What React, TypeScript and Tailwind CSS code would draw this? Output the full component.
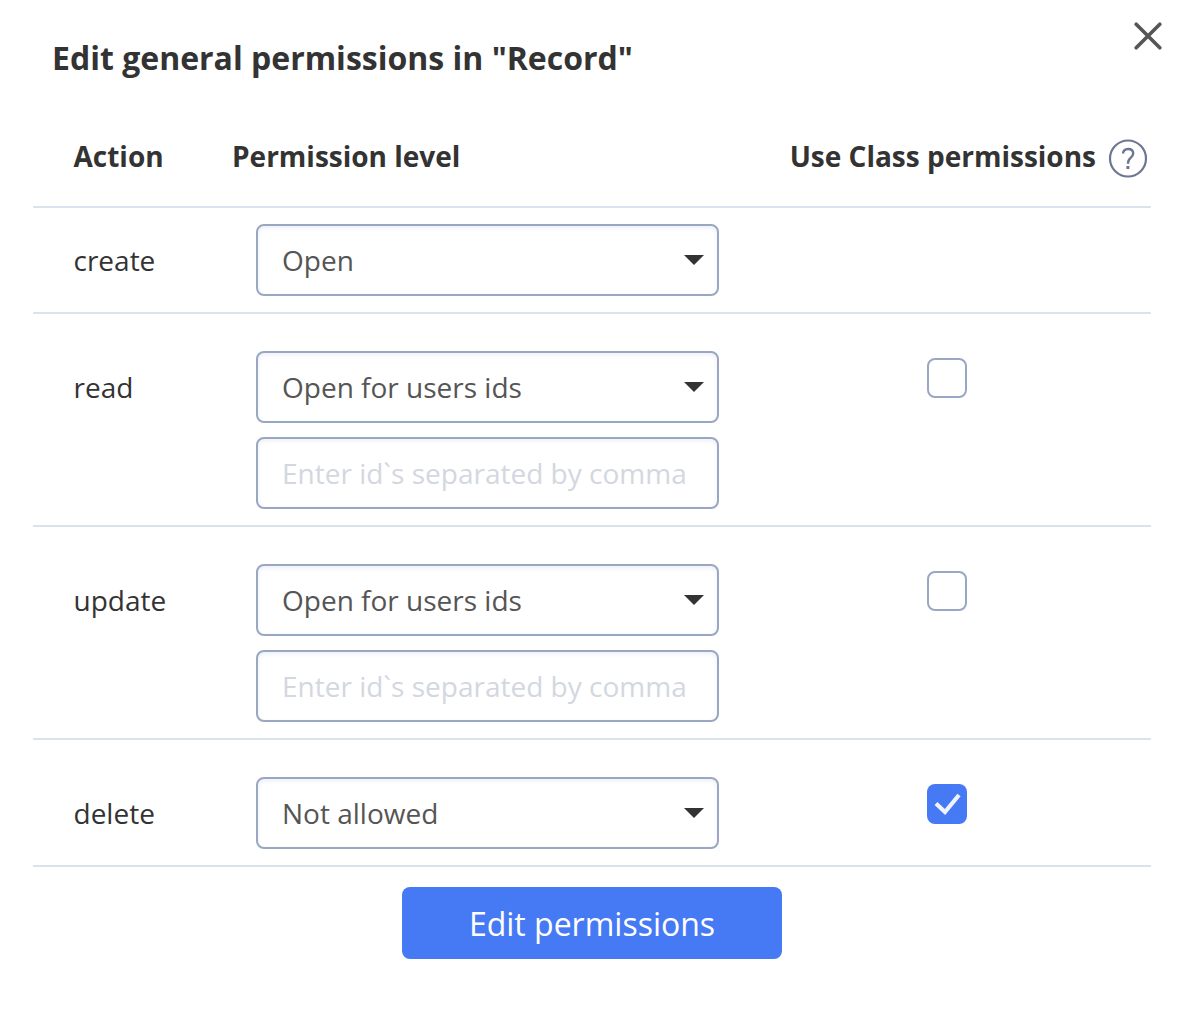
import React from "react";

function Select({ label }: { label: string }) {
  return (
    <button className="flex h-[72px] w-[463px] items-center justify-between rounded-lg border-2 border-[#9aa7c2] bg-white pr-[13px] pl-[24px] text-left text-[28px] leading-[38px] text-[#555] shadow-[inset_0_2px_4px_rgba(100,120,180,0.12)]">
      <span className="whitespace-nowrap">{label}</span>
      <svg width="20" height="10" viewBox="0 0 20 10">
        <path d="M0 0H20L10 10Z" fill="#333" />
      </svg>
    </button>
  );
}

function IdsInput() {
  return (
    <input
      placeholder="Enter id`s separated by comma"
      className="mt-[14px] block h-[72px] w-[463px] rounded-lg border-2 border-[#9aa7c2] bg-white px-[24px] text-[28px] shadow-[inset_0_2px_4px_rgba(100,120,180,0.12)] placeholder:text-[#d3d7df] placeholder:opacity-100"
    />
  );
}

function Check({ checked }: { checked: boolean }) {
  return checked ? (
    <span className="flex size-10 items-center justify-center rounded-lg bg-[#467af4]">
      <svg width="40" height="40" viewBox="0 0 40 40" fill="none">
        <path d="M9 19.5L18 28L32 11" stroke="#f1f4fe" strokeWidth="4.2" />
      </svg>
    </span>
  ) : (
    <span className="block size-10 rounded-lg border-2 border-[#9aa7c2] bg-white" />
  );
}

const rows = [
  { action: "create", level: "Open", ids: false, check: null, cls: "h-[106px] pt-4" },
  { action: "read", level: "Open for users ids", ids: true, check: false, cls: "h-[213px] pt-[37px]" },
  { action: "update", level: "Open for users ids", ids: true, check: false, cls: "h-[213px] pt-[37px]" },
  { action: "delete", level: "Not allowed", ids: false, check: true, cls: "h-[127px] pt-[37px]" },
];

export default function App() {
  return (
    <div className="h-[1028px] w-[1180px] overflow-hidden bg-white font-['Open_Sans',sans-serif] text-[28px] leading-[38px] text-[#333]">
      <header className="flex h-[137px] justify-between pt-[22px] pr-[18px] pl-[52px]">
        <h1 className="mt-[14px] text-[32px] leading-[44px] font-bold">Edit general permissions in "Record"</h1>
        <svg width="28" height="28" viewBox="0 0 28 28" fill="none">
          <path d="M2.2 2.2L25.8 25.8M25.8 2.2L2.2 25.8" stroke="#555" strokeWidth="3.6" strokeLinecap="round" />
        </svg>
      </header>
      <main className="ml-[33px] w-[1118px]">
        <div className="flex h-[71px] border-b-2 border-[#dae2f0] pr-[3px] pl-[40.5px] font-bold">
          <span className="w-[158.5px]">Action</span>
          <span>Permission level</span>
          <span className="ml-auto">Use Class permissions</span>
          <svg width="40" height="40" viewBox="0 0 40 40" fill="none" className="mt-px ml-3 text-[#6c7693]">
            <circle cx="20" cy="20.5" r="18" stroke="currentColor" strokeWidth="2.2" />
            <path
              d="M15 15.6C15 12.8 17.1 11 20 11C23.1 11 25.2 12.7 25.2 15.4C25.2 17.4 24.1 18.6 22.4 20.1C20.6 21.6 20 22.7 20 25.7"
              stroke="currentColor"
              strokeWidth="2.4"
            />
            <rect x="18.4" y="28" width="3" height="3" rx="0.5" fill="currentColor" />
          </svg>
        </div>
        {rows.map((r) => (
          <div key={r.action} className={`flex items-start border-b-2 border-[#dae2f0] pl-[40.5px] ${r.cls}`}>
            <span className="mt-[17px] w-[182.5px]">{r.action}</span>
            <div>
              <Select label={r.level} />
              {r.ids && <IdsInput />}
            </div>
            {r.check !== null && (
              <div className="mt-[7px] ml-[208px]">
                <Check checked={r.check} />
              </div>
            )}
          </div>
        ))}
        <button className="mt-5 ml-[369px] block h-[72px] w-[380px] rounded-lg bg-[#467af4] pt-0.5 text-[32px] text-white">
          Edit permissions
        </button>
      </main>
    </div>
  );
}
